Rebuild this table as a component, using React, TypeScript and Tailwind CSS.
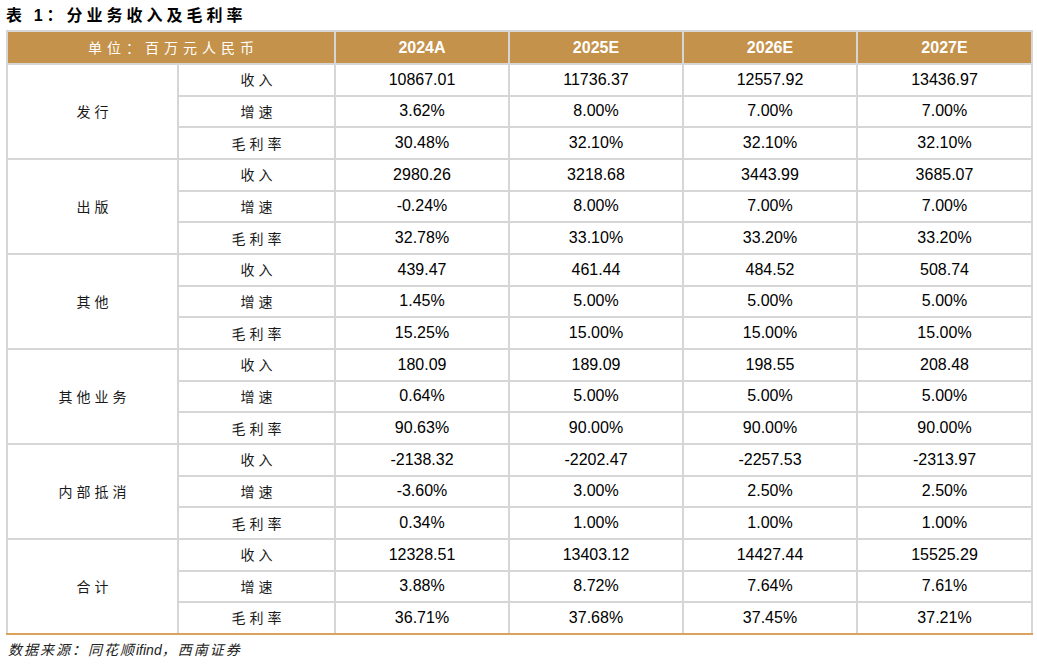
const groups = [
  {
    name: "发行",
    rows: [
      ["收入", "10867.01", "11736.37", "12557.92", "13436.97"],
      ["增速", "3.62%", "8.00%", "7.00%", "7.00%"],
      ["毛利率", "30.48%", "32.10%", "32.10%", "32.10%"],
    ],
  },
  {
    name: "出版",
    rows: [
      ["收入", "2980.26", "3218.68", "3443.99", "3685.07"],
      ["增速", "-0.24%", "8.00%", "7.00%", "7.00%"],
      ["毛利率", "32.78%", "33.10%", "33.20%", "33.20%"],
    ],
  },
  {
    name: "其他",
    rows: [
      ["收入", "439.47", "461.44", "484.52", "508.74"],
      ["增速", "1.45%", "5.00%", "5.00%", "5.00%"],
      ["毛利率", "15.25%", "15.00%", "15.00%", "15.00%"],
    ],
  },
  {
    name: "其他业务",
    rows: [
      ["收入", "180.09", "189.09", "198.55", "208.48"],
      ["增速", "0.64%", "5.00%", "5.00%", "5.00%"],
      ["毛利率", "90.63%", "90.00%", "90.00%", "90.00%"],
    ],
  },
  {
    name: "内部抵消",
    rows: [
      ["收入", "-2138.32", "-2202.47", "-2257.53", "-2313.97"],
      ["增速", "-3.60%", "3.00%", "2.50%", "2.50%"],
      ["毛利率", "0.34%", "1.00%", "1.00%", "1.00%"],
    ],
  },
  {
    name: "合计",
    rows: [
      ["收入", "12328.51", "13403.12", "14427.44", "15525.29"],
      ["增速", "3.88%", "8.72%", "7.64%", "7.61%"],
      ["毛利率", "36.71%", "37.68%", "37.45%", "37.21%"],
    ],
  },
];

const years = ["2024A", "2025E", "2026E", "2027E"];

const cjk = "font-['Noto_Sans_CJK_SC',sans-serif]";
const num = "font-['Liberation_Sans',Arial,sans-serif]";

export default function App() {
  return (
    <div className="h-[666px] w-[1037px] bg-white">
      <h1 className={`${cjk} px-[6px] pt-[3px] text-[16px] font-bold leading-[22px] tracking-[4px] text-black`}>
        表 <span className={num}>1</span>：分业务收入及毛利率
      </h1>
      <table className="ml-[6px] mt-[3px] w-[1025px] table-fixed border-collapse">
        <colgroup>
          <col className="w-[171px]" />
          <col className="w-[157px]" />
          <col className="w-[174px]" />
          <col className="w-[174px]" />
          <col className="w-[174px]" />
          <col className="w-[175px]" />
        </colgroup>
        <thead>
          <tr className="h-[33px] bg-[#c4924a] text-white">
            <th
              colSpan={2}
              className={`${cjk} border-2 border-[#d6d6d6] pl-[5px] text-[14px] font-normal tracking-[5px]`}
            >
              单位：百万元人民币
            </th>
            {years.map((y) => (
              <th key={y} className={`${num} border-2 border-[#d6d6d6] text-[16px] font-bold`}>
                {y}
              </th>
            ))}
          </tr>
        </thead>
        <tbody>
          {groups.map((g, gi) =>
            g.rows.map((r, ri) => {
              const lastRow = gi === groups.length - 1 && ri === 2;
              const bottom = lastRow ? "border-b-[#d9a35e]" : "";
              return (
                <tr key={g.name + r[0]} className="h-[31.67px]">
                  {ri === 0 && (
                    <td
                      rowSpan={3}
                      className={`${cjk} border-2 border-[#d6d6d6] pl-[4px] text-center text-[14px] tracking-[4px] text-[#1a1a1a] ${
                        gi === groups.length - 1 ? "border-b-[#d9a35e]" : "border-b-[#d6d6d6]"
                      }`}
                    >
                      {g.name}
                    </td>
                  )}
                  <td
                    className={`${cjk} border-2 border-[#d6d6d6] pl-[4px] text-center text-[14px] tracking-[4px] text-[#1a1a1a] ${bottom}`}
                  >
                    {r[0]}
                  </td>
                  {r.slice(1).map((v, vi) => (
                    <td
                      key={vi}
                      className={`${num} border-2 border-[#d6d6d6] text-center text-[16px] text-black ${bottom}`}
                    >
                      {v}
                    </td>
                  ))}
                </tr>
              );
            })
          )}
        </tbody>
      </table>
      <p className={`${cjk} px-[8px] pt-[4px] text-[14px] italic leading-[20px] tracking-[2px] text-[#222]`}>
        数据来源：同花顺<span className={`${num} tracking-normal`}>ifind</span>，西南证券
      </p>
    </div>
  );
}
